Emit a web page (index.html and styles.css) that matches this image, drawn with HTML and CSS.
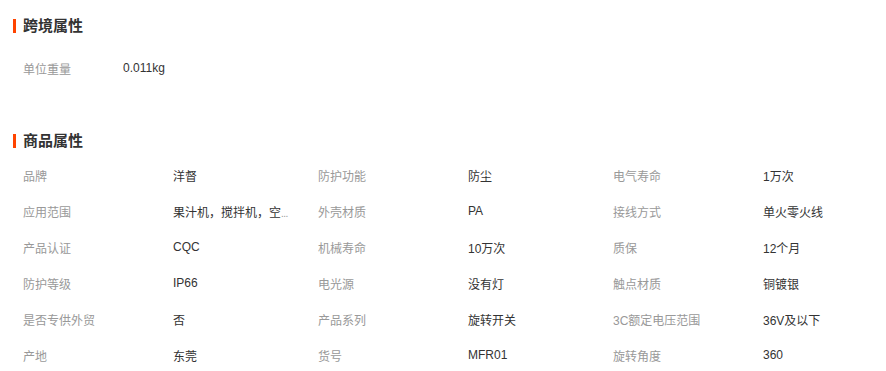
FILE: index.html
```html
<!DOCTYPE html>
<html lang="zh-CN">
<head>
<meta charset="utf-8">
<title>属性</title>
<link rel="stylesheet" href="styles.css">
</head>
<body>
<section class="section section-first">
  <h2 class="title"><span class="bar"></span>跨境属性</h2>
  <div class="grid grid-first">
    <div class="label">单位重量</div><div class="value">0.011kg</div>
  </div>
</section>
<section class="section section-second">
  <h2 class="title"><span class="bar"></span>商品属性</h2>
  <div class="grid">
    <div class="label">品牌</div><div class="value">洋督</div>
    <div class="label">防护功能</div><div class="value">防尘</div>
    <div class="label">电气寿命</div><div class="value">1万次</div>

    <div class="label">应用范围</div><div class="value">果汁机，搅拌机，空<span class="dots">...</span></div>
    <div class="label">外壳材质</div><div class="value">PA</div>
    <div class="label">接线方式</div><div class="value">单火零火线</div>

    <div class="label">产品认证</div><div class="value">CQC</div>
    <div class="label">机械寿命</div><div class="value">10万次</div>
    <div class="label">质保</div><div class="value">12个月</div>

    <div class="label">防护等级</div><div class="value">IP66</div>
    <div class="label">电光源</div><div class="value">没有灯</div>
    <div class="label">触点材质</div><div class="value">铜镀银</div>

    <div class="label">是否专供外贸</div><div class="value">否</div>
    <div class="label">产品系列</div><div class="value">旋转开关</div>
    <div class="label">3C额定电压范围</div><div class="value">36V及以下</div>

    <div class="label">产地</div><div class="value">东莞</div>
    <div class="label">货号</div><div class="value">MFR01</div>
    <div class="label">旋转角度</div><div class="value">360</div>
  </div>
</section>
</body>
</html>
```
FILE: styles.css
```css
html, body {
  margin: 0;
  padding: 0;
  background: #fff;
  overflow: hidden;
}
body {
  font-family: "Liberation Sans", "Noto Sans CJK SC", sans-serif;
  font-size: 12px;
  color: #333;
  width: 886px;
}
.section {
  padding-left: 13px;
}
.section-first {
  padding-top: 18px;
}
.section-second {
  padding-top: 47px;
}
.title {
  display: flex;
  align-items: center;
  gap: 7px;
  margin: 0;
  height: 16px;
  line-height: 16px;
  font-size: 15px;
  font-weight: bold;
  color: #333;
}
.bar {
  display: block;
  width: 3px;
  height: 14px;
  background: #ff4400;
}
.grid {
  display: grid;
  grid-template-columns: 150px 145px 150px 145px 150px 1fr;
  grid-auto-rows: 36px;
  padding-left: 10px;
  margin-top: 8px;
  align-items: center;
}
.grid-first {
  grid-template-columns: 100px 1fr;
  margin-top: 16px;
}
.label {
  color: #999;
  white-space: nowrap;
}
.value {
  color: #333;
  white-space: nowrap;
}
.dots {
  color: #999;
  font-size: 10px;
  letter-spacing: -0.5px;
}
```
